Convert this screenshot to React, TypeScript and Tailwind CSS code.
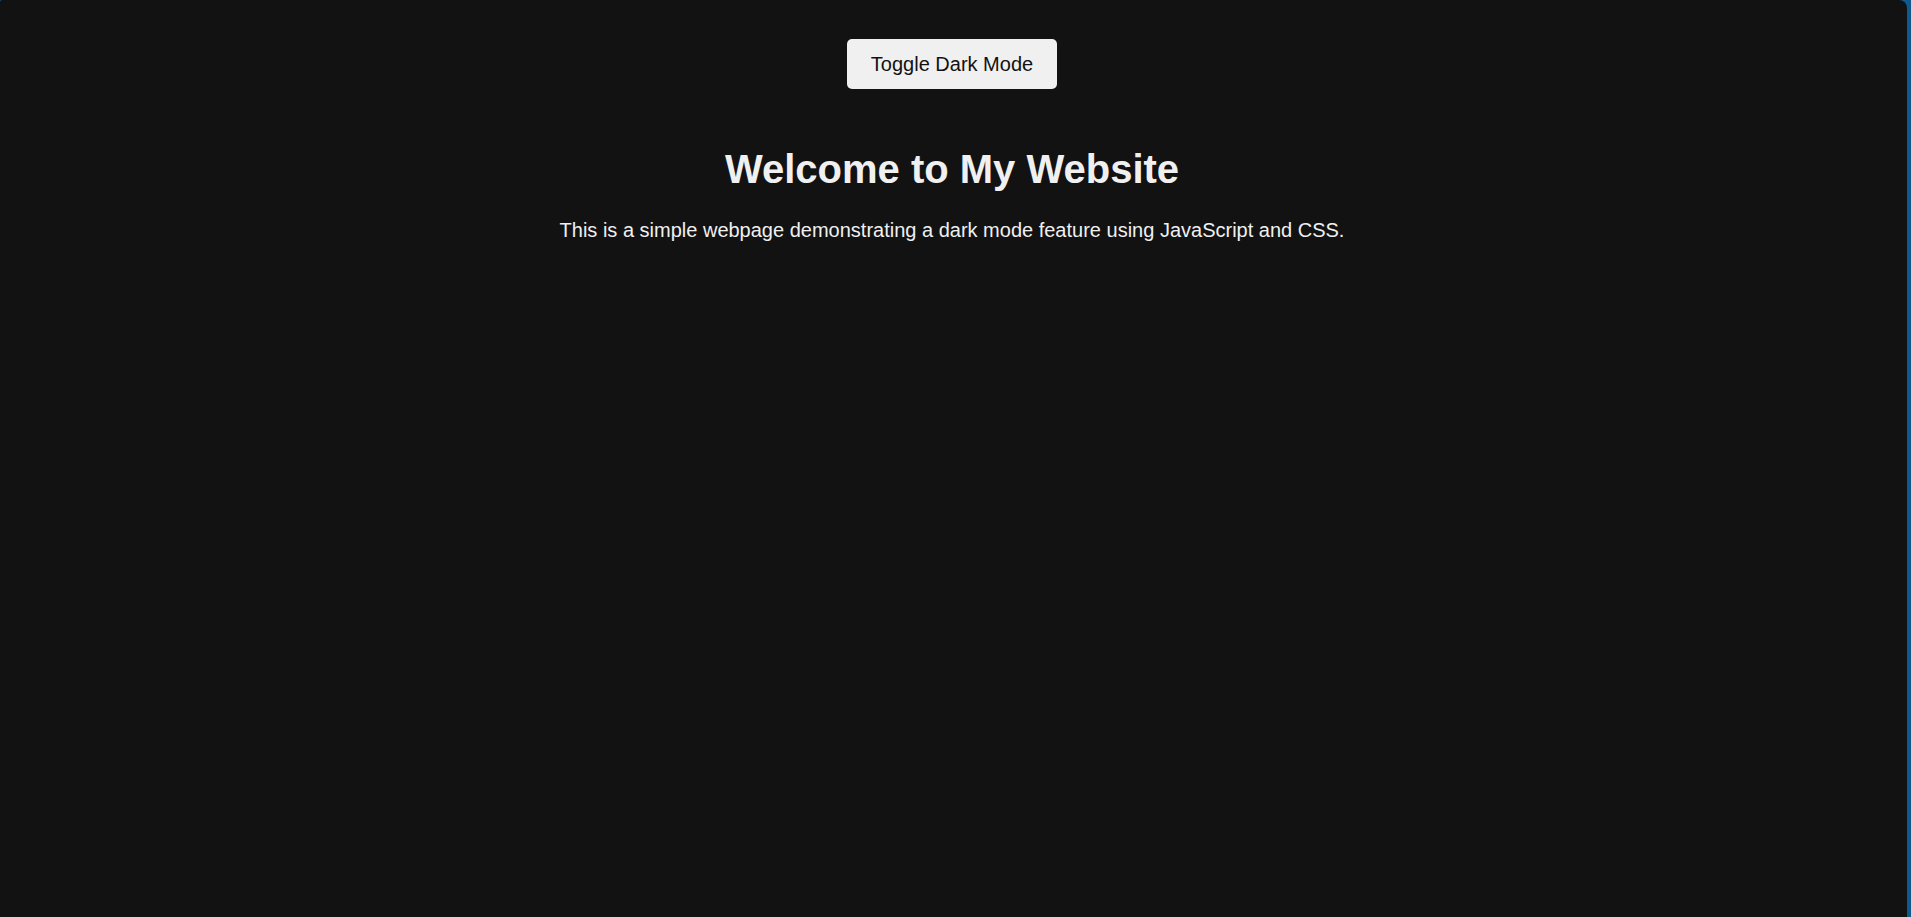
import React, { useState } from "react";

export default function App() {
  const [dark, setDark] = useState(true);

  return (
    <div className="flex h-[917px] w-full bg-[#0d5a8e] font-['Liberation_Sans',Arial,sans-serif]">
      <div
        className={
          dark
            ? "mr-[4px] flex flex-1 flex-col items-center rounded-tl-[2px] rounded-tr-[8px] bg-[#121212] pr-[3px] pt-[39px] text-[#f0f0f0]"
            : "mr-[4px] flex flex-1 flex-col items-center rounded-tl-[2px] rounded-tr-[8px] bg-white pr-[3px] pt-[39px] text-[#121212]"
        }
      >
        <button
          onClick={() => setDark(!dark)}
          className="flex h-[50px] w-[210px] items-center justify-center rounded-[5px] bg-[#f0f0f0] text-[20px] text-[#121212]"
        >
          Toggle Dark Mode
        </button>

        <h1 className="mt-[58px] text-[40px] font-bold leading-[45px]">
          Welcome to My Website
        </h1>
        <p className="mt-[27px] text-[20px] leading-[22px]">
          This is a simple webpage demonstrating a dark mode feature using JavaScript and CSS.
        </p>
      </div>
    </div>
  );
}
